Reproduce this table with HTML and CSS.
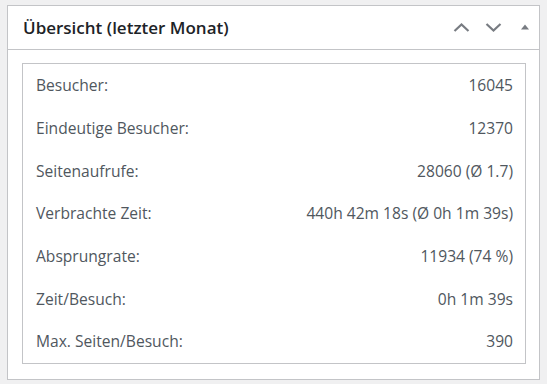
FILE: index.html
```html
<!DOCTYPE html>
<html lang="de">
<head>
<meta charset="utf-8">
<title>Übersicht</title>
<link rel="stylesheet" href="styles.css">
</head>
<body>
<div class="postbox">
  <div class="postbox-header">
    <h2 class="title">Übersicht (letzter Monat)</h2>
    <div class="actions">
      <svg class="chev" width="17" height="9" viewBox="0 0 17 9"><path d="M1.5 8 L8.5 1.5 L15.5 8" fill="none" stroke="#787c82" stroke-width="2.2"/></svg>
      <svg class="chev chev-down" width="17" height="9" viewBox="0 0 17 9"><path d="M1.5 1 L8.5 7.5 L15.5 1" fill="none" stroke="#787c82" stroke-width="2.2"/></svg>
      <svg class="tri" width="8" height="6" viewBox="0 0 8 6"><path d="M4 0.5 L8 5.5 L0 5.5 Z" fill="#787c82"/></svg>
    </div>
  </div>
  <div class="inside">
    <div class="stats">
      <div class="row"><span>Besucher:</span><span>16045</span></div>
      <div class="row"><span>Eindeutige Besucher:</span><span>12370</span></div>
      <div class="row"><span>Seitenaufrufe:</span><span>28060 (Ø 1.7)</span></div>
      <div class="row"><span>Verbrachte Zeit:</span><span>440h 42m 18s (Ø 0h 1m 39s)</span></div>
      <div class="row"><span>Absprungrate:</span><span>11934 (74 %)</span></div>
      <div class="row"><span>Zeit/Besuch:</span><span>0h 1m 39s</span></div>
      <div class="row"><span>Max. Seiten/Besuch:</span><span>390</span></div>
    </div>
  </div>
</div>
</body>
</html>
```

FILE: styles.css
```css
html, body {
  margin: 0;
  padding: 0;
}
body {
  background: #f0f0f1;
  padding: 5px 7px 0 7px;
  font-family: "Open Sans", "Noto Sans", sans-serif;
}
.postbox {
  box-sizing: border-box;
  width: 533px;
  background: #fff;
  border: 1px solid #c3c4c7;
}
.postbox-header {
  display: flex;
  align-items: center;
  height: 43px;
  border-bottom: 1px solid #c3c4c7;
  padding: 0 10px 0 15px;
}
.title {
  flex: 1;
  margin: 0;
  font-size: 17px;
  font-weight: 600;
  color: #1d2327;
}
.actions {
  display: flex;
  align-items: center;
}
.chev-down {
  margin-left: 15px;
}
.tri {
  margin-left: 19px;
  margin-bottom: 2px;
}
.inside {
  padding: 13px 13px 15px 14px;
}
.stats {
  border: 1px solid #c3c4c7;
  padding: 0 12px 0 13px;
}
.row {
  display: flex;
  justify-content: space-between;
  align-items: center;
  height: 42.67px;
  font-size: 15.6px;
  color: #50575e;
}
```
